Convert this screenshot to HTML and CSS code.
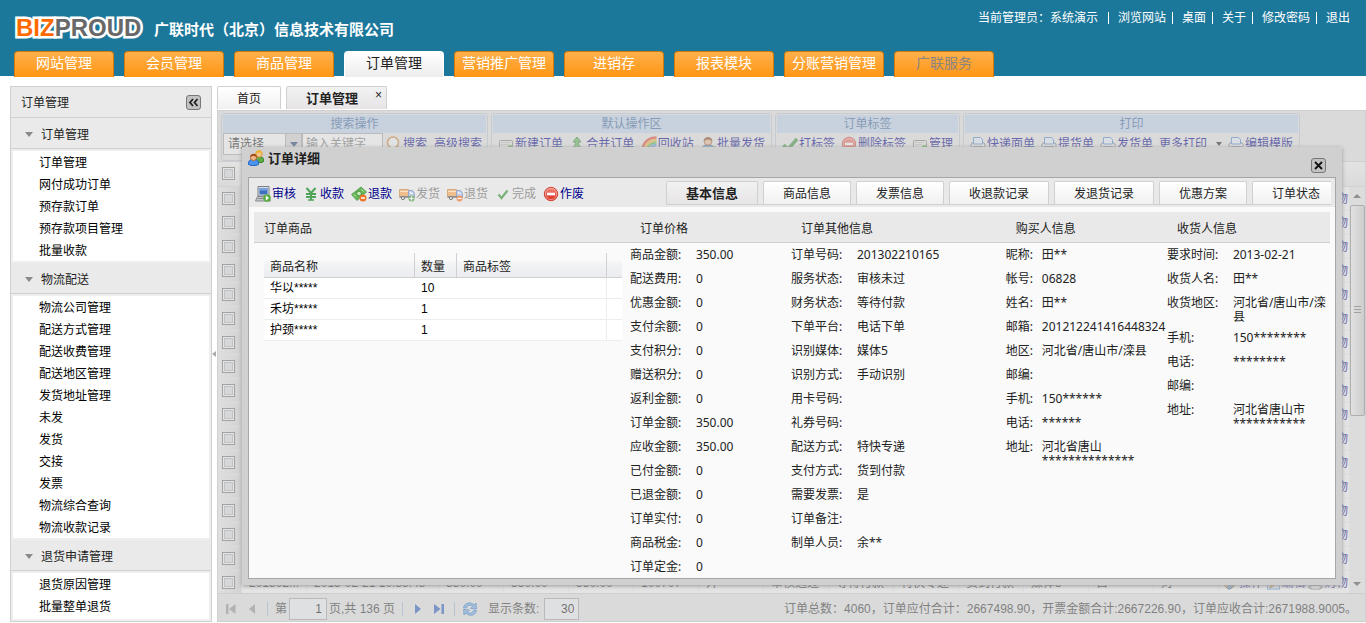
FILE: index.html
```html
<!DOCTYPE html>
<html lang="zh-CN">
<head>
<meta charset="utf-8">
<title>订单管理</title>
<link rel="stylesheet" href="styles.css">
</head>
<body>
<svg class="sprite" aria-hidden="true">
  <defs>
    <linearGradient id="g-red" x1="0" y1="0" x2="0" y2="1"><stop offset="0" stop-color="#f58b7c"/><stop offset="1" stop-color="#d52b1c"/></linearGradient>
  </defs>
  <symbol id="i-users" viewBox="0 0 16 16">
    <path d="M7 12c0-4 1-5 4.500-5s4.500 1 4.500 4l-2 1.500H7z" fill="#5cab46" stroke="#3b8429"/>
    <circle cx="11" cy="4" r="3.200" fill="#f3c58d" stroke="#d59635"/><path d="M7.500 4c0-5 7-5 7 0-2-2-5-2-7 0z" fill="#edb526"/>
    <path d="M.5 14.500c0-4 1-5 5-5s5 1 5 5c-3 1.500-7 1.500-10 0z" fill="#4a94ee" stroke="#2264bd"/>
    <circle cx="5.500" cy="7.500" r="3" fill="#f1b98a" stroke="#bd6b2f"/><path d="M2 7.500c0-5 7-5 7 0-2-2-5-2-7 0z" fill="#a84e1c"/>
  </symbol>
  <symbol id="i-laptop" viewBox="0 0 16 16">
    <path d="M3 .5h11V10H3z" fill="#dadde2" stroke="#7b8087"/><path d="M4.500 2h8v6.500h-8z" fill="#3c6fc0"/><path d="M4.500 2h8v2.500h-8z" fill="#78a2df"/>
    <path d="M2.500 10.500h11l2 4.500H.5z" fill="#c4c7cb" stroke="#85898e"/><path d="M3 12.500h6" stroke="#888"/>
    <circle cx="12" cy="12" r="3.800" fill="#59ad41"/><path d="M10.800 9.500l3.200 2.500-3.200 2.500z" fill="#fff"/>
  </symbol>
  <symbol id="i-yen" viewBox="0 0 16 16"><path d="M3.500 2L8 7l4.500-5M8 7v7M3 8h10M3 11h10" fill="none" stroke="#4fa457" stroke-width="2"/><path d="M5 14h6" stroke="#4fa457" stroke-width="1.500"/></symbol>
  <symbol id="i-money" viewBox="0 0 16 16">
    <path d="M.5 8.500L10 1l5.500 5L6 14.500z" fill="#64b557" stroke="#4b9a4b" stroke-width=".8"/><circle cx="8" cy="7.500" r="2.300" fill="#c8eabc" stroke="#3c8c3b" stroke-width=".8"/><path d="M3 8.500l2 2M10.500 3.500l2 2" stroke="#d4f0ca"/>
    <circle cx="12" cy="12" r="3.500" fill="#ee7427"/><path d="M10 12h4" stroke="#fff" stroke-width="1.500"/>
  </symbol>
  <symbol id="i-truck" viewBox="0 0 16 16">
    <path d="M.5 3.500h9v7h-9z" fill="#f3a85b" stroke="#d08a48"/><path d="M1 5.500h8" stroke="#ffe0b8"/>
    <path d="M9.500 4.500h4l2 3v4h-6z" fill="#a9bfe5" stroke="#6f87b3"/><path d="M11 6h2l1 2h-3z" fill="#e8f2ff"/><path d="M.5 11h14" stroke="#53565d" stroke-width="1.500"/>
    <circle cx="4" cy="12" r="1.600" fill="#ddd" stroke="#444"/>
  </symbol>
  <symbol id="i-truck-add" viewBox="0 0 16 16"><use href="#i-truck"/><circle cx="12.500" cy="12.500" r="3" fill="#4b9a3d"/><path d="M10.500 12.500h4M12.500 10.500v4" stroke="#fff" stroke-width="1.200"/></symbol>
  <symbol id="i-truck-del" viewBox="0 0 16 16"><use href="#i-truck"/><circle cx="12.500" cy="12.500" r="3" fill="#ee7427"/><path d="M10.500 12.500h4" stroke="#fff" stroke-width="1.200"/></symbol>
  <symbol id="i-check" viewBox="0 0 16 16"><path d="M3.500 8.500l3 3.500L12.500 4.500" fill="none" stroke="#3f9540" stroke-width="2.200"/></symbol>
  <symbol id="i-tick" viewBox="0 0 16 16"><path d="M1.500 9l4.500 4.500L15 3" fill="none" stroke="#3f9540" stroke-width="3.500"/></symbol>
  <symbol id="i-stop" viewBox="0 0 16 16"><circle cx="8" cy="8" r="6.700" fill="url(#g-red)" stroke="#d0453a"/><circle cx="8" cy="8" r="5.600" fill="none" stroke="#fbb6ab" stroke-width=".7"/><path d="M4 8h8" stroke="#fff" stroke-width="2.600"/></symbol>
  <symbol id="i-search" viewBox="0 0 16 16"><circle cx="7" cy="6.500" r="5.500" fill="#f6f9fd" stroke="#d08a3c" stroke-width="1.500"/><path d="M11 11l4 4" stroke="#b36b2b" stroke-width="2.500"/></symbol>
  <symbol id="i-form" viewBox="0 0 16 16"><rect x="1.500" y="4.500" width="13" height="9" rx="1" fill="#e7e7e3" stroke="#84867f"/><path d="M3 6.500h9M3 8.500h7" stroke="#c5c5c0"/><circle cx="12.500" cy="12" r="3" fill="#58a546"/></symbol>
  <symbol id="i-merge" viewBox="0 0 16 16"><path d="M8 1l4 5H9.500c0 4 2 5 4.500 6v3c-3-.5-5-2-6-4-1 2-3 3.500-6 4v-3c2.500-1 4.500-2 4.500-6H4z" fill="#65b85a" stroke="#37893a"/></symbol>
  <symbol id="i-rainbow" viewBox="0 0 16 16" fill="none"><path d="M1.500 15C1.500 7 7 1.500 15.500 1.500" stroke="#e34d3d" stroke-width="2.500"/><path d="M4 15C4 8.500 8.500 4 15.500 4" stroke="#f4b73e" stroke-width="2.500"/><path d="M6.500 15c0-5 3.500-8.500 9-8.500" stroke="#67b759" stroke-width="2.500"/><path d="M9 15c0-3.500 2.500-6 6.500-6" stroke="#5b9ddf" stroke-width="2.500"/></symbol>
  <symbol id="i-person" viewBox="0 0 16 16"><path d="M2 15c0-5 1.500-6 6-6s6 1 6 6z" fill="#5b96ce" stroke="#39699b"/><circle cx="8" cy="5.500" r="3.700" fill="#f2bf96" stroke="#a16036"/><path d="M3.500 5.500c0-6 9-6 9 0-3-2.500-6-2.500-9 0z" fill="#8c552c"/><circle cx="13" cy="13" r="3" fill="#58a546"/></symbol>
  <symbol id="i-printer" viewBox="0 0 16 16"><path d="M1 8l2-1.500h10L15 8v5.500H1z" fill="#ececee" stroke="#707580"/><path d="M3.500 1.500h7l2 2V8h-9z" fill="#e5f1fd" stroke="#568dc9"/><path d="M3 10.500h10v4H3z" fill="#fff" stroke="#7d828c"/></symbol>
  <symbol id="i-tools" viewBox="0 0 16 16"><circle cx="7" cy="8" r="6" fill="#e8b65a" stroke="#a2762d"/><path d="M4 13l9-9 2 2-8 9z" fill="#6d9fd8" stroke="#466b99"/></symbol>
  <symbol id="i-edit" viewBox="0 0 16 16"><rect x="1.500" y="2.500" width="13" height="12" fill="#e4effc" stroke="#5f91ce"/><path d="M4 13l1-3 7-8 2 2-7 8z" fill="#efad45" stroke="#a8742a"/></symbol>
  <symbol id="i-refresh" viewBox="0 0 16 16"><path d="M1.500 7C2 2 9 0 12 4l2-2 .5 6-6-.5 2-2C8.500 3.500 5 4 4.500 7zM14.500 9.500c-.5 5-7.500 6.500-10.500 2.500l-2 2L1.500 8.500l6 .5-2 2c2 2 5.500 1 6-1.500z" fill="#77b2ee" stroke="#2f77c7" stroke-width=".8"/></symbol>
  <symbol id="i-first" viewBox="0 0 16 16"><path d="M3 3h2.500v10H3zM12.500 3v10L6 8z" fill="currentColor"/></symbol>
  <symbol id="i-prev" viewBox="0 0 16 16"><path d="M11 3v10L5 8z" fill="currentColor"/></symbol>
  <symbol id="i-next" viewBox="0 0 16 16"><path d="M5 3v10l6-5z" fill="currentColor"/></symbol>
  <symbol id="i-last" viewBox="0 0 16 16"><path d="M3 3v10l6.500-5zM10.500 3H13v10h-2.500z" fill="currentColor"/></symbol>
</svg>

<header class="top">
  <div class="top-row">
    <div class="logo"><span class="logo-biz">BIZ</span>PROUD</div>
    <h1 class="company">广联时代（北京）信息技术有限公司</h1>
    <ul class="links">
      <li>当前管理员：系统演示</li>
      <li><a href="#">浏览网站</a></li>
      <li><a href="#">桌面</a></li>
      <li><a href="#">关于</a></li>
      <li><a href="#">修改密码</a></li>
      <li><a href="#">退出</a></li>
    </ul>
  </div>
  <nav class="nav">
    <a href="#">网站管理</a><a href="#">会员管理</a><a href="#">商品管理</a><a href="#" class="current">订单管理</a><a href="#">营销推广管理</a><a href="#">进销存</a><a href="#">报表模块</a><a href="#">分账营销管理</a><a href="#" class="off">广联服务</a>
  </nav>
</header>

<div class="body">
  <aside class="side">
    <div class="side-title"><span>订单管理</span>
      <button class="tool" aria-label="收起"><svg viewBox="0 0 15 15"><path d="M7 4L4 7.500 7 11M11.500 4l-3 3.500 3 3.500" fill="none" stroke="#222" stroke-width="1.800"/></svg></button>
    </div>
    <section>
      <h2>订单管理</h2>
      <ul><li><a href="#">订单管理</a></li><li><a href="#">网付成功订单</a></li><li><a href="#">预存款订单</a></li><li><a href="#">预存款项目管理</a></li><li><a href="#">批量收款</a></li></ul>
    </section>
    <section>
      <h2>物流配送</h2>
      <ul><li><a href="#">物流公司管理</a></li><li><a href="#">配送方式管理</a></li><li><a href="#">配送收费管理</a></li><li><a href="#">配送地区管理</a></li><li><a href="#">发货地址管理</a></li><li><a href="#">未发</a></li><li><a href="#">发货</a></li><li><a href="#">交接</a></li><li><a href="#">发票</a></li><li><a href="#">物流综合查询</a></li><li><a href="#">物流收款记录</a></li></ul>
    </section>
    <section class="fill">
      <h2>退货申请管理</h2>
      <ul><li><a href="#">退货原因管理</a></li><li><a href="#">批量整单退货</a></li></ul>
    </section>
  </aside>
  <div class="split"></div>

  <main class="main">
    <div class="tabs">
      <button class="tab">首页</button>
      <button class="tab active closable">订单管理<span class="x">×</span></button>
    </div>
    <div class="panel">
      <div class="toolbar">
        <div class="group g1"><h3>搜索操作</h3>
          <div class="tools">
            <select class="pick" aria-label="搜索类型"><option>请选择</option></select><span class="pick-arrow"></span>
            <input class="keyword" type="text" placeholder="输入关键字" aria-label="关键字">
            <button><svg><use href="#i-search"/></svg>搜索</button><button>高级搜索</button>
          </div></div>
        <div class="group g2"><h3>默认操作区</h3>
          <div class="tools"><button><svg><use href="#i-form"/></svg>新建订单</button><button><svg><use href="#i-merge"/></svg>合并订单</button><button><svg><use href="#i-rainbow"/></svg>回收站</button><button><svg><use href="#i-person"/></svg>批量发货</button></div></div>
        <div class="group g3"><h3>订单标签</h3>
          <div class="tools"><button><svg><use href="#i-tick"/></svg>打标签</button><button><svg><use href="#i-stop"/></svg>删除标签</button><button><svg><use href="#i-form"/></svg>管理</button></div></div>
        <div class="group g4"><h3>打印</h3>
          <div class="tools"><button><svg><use href="#i-printer"/></svg>快递面单</button><button><svg><use href="#i-printer"/></svg>提货单</button><button><svg><use href="#i-printer"/></svg>发货单</button><button class="menu">更多打印</button><button><svg><use href="#i-printer"/></svg>编辑模版</button></div></div>
      </div>

      <div class="grid">
        <div class="grid-head"><input type="checkbox" aria-label="全选"></div>
        <div class="grid-body">
          <table class="rows">
            <colgroup><col class="c-check"><col class="c-id"><col class="c-time"><col span="12" class="c-cell"><col></colgroup>
            <tbody id="rows"></tbody>
          </table>
          <div class="scroll"><i class="up"></i><i class="thumb"></i><i class="down"></i></div>
        </div>
      </div>

      <div class="pager">
        <button class="dim" aria-label="首页"><svg><use href="#i-first"/></svg></button>
        <button class="dim" aria-label="上一页"><svg><use href="#i-prev"/></svg></button>
        <i class="sep"></i>
        <label for="page">第</label><input id="page" class="page" type="text" value="1"><span>页,共 136 页</span>
        <i class="sep"></i>
        <button aria-label="下一页"><svg><use href="#i-next"/></svg></button>
        <button aria-label="末页"><svg><use href="#i-last"/></svg></button>
        <i class="sep"></i>
        <button aria-label="刷新"><svg><use href="#i-refresh"/></svg></button>
        <label for="size" class="size-label">显示条数:</label><input id="size" class="size" type="text" value="30">
        <span class="sum">订单总数：4060，订单应付合计：2667498.90，开票金额合计:2667226.90，订单应收合计:2671988.9005。</span>
      </div>

      <div class="mask"></div>

      <div class="dialog" role="dialog" aria-labelledby="dlg-title">
        <div class="dlg-head">
          <svg><use href="#i-users"/></svg><h2 id="dlg-title">订单详细</h2>
          <button class="tool" aria-label="关闭"><svg viewBox="0 0 15 15"><path d="M4 4l7 7M11 4l-7 7" stroke="#111" stroke-width="1.800"/></svg></button>
        </div>
        <div class="dlg-body">
          <div class="dlg-bar">
            <div class="acts">
              <button><svg><use href="#i-laptop"/></svg>审核</button><button><svg><use href="#i-yen"/></svg>收款</button><button><svg><use href="#i-money"/></svg>退款</button><button disabled><svg><use href="#i-truck-add"/></svg>发货</button><button disabled><svg><use href="#i-truck-del"/></svg>退货</button><button disabled><svg><use href="#i-check"/></svg>完成</button><button><svg><use href="#i-stop"/></svg>作废</button>
            </div>
            <div class="dlg-tabs">
              <button class="tab active">基本信息</button><button class="tab">商品信息</button><button class="tab">发票信息</button><button class="tab">收退款记录</button><button class="tab">发退货记录</button><button class="tab">优惠方案</button><button class="tab">订单状态</button>
            </div>
          </div>
          <div class="cols heads"><h3>订单商品</h3><h3>订单价格</h3><h3>订单其他信息</h3><h3>购买人信息</h3><h3>收货人信息</h3></div>
          <div class="cols">
            <div class="goods-box">
              <table class="goods">
                <colgroup><col class="w-name"><col class="w-num"><col class="w-tag"><col></colgroup>
                <thead><tr><th>商品名称</th><th>数量</th><th>商品标签</th><th></th></tr></thead>
                <tbody>
                  <tr><td>华以*****</td><td>10</td><td></td><td></td></tr>
                  <tr><td>禾坊*****</td><td>1</td><td></td><td></td></tr>
                  <tr><td>护颈*****</td><td>1</td><td></td><td></td></tr>
                </tbody>
              </table>
            </div>
            <dl class="fields">
              <div><dt>商品金额:</dt><dd>350.00</dd></div><div><dt>配送费用:</dt><dd>0</dd></div><div><dt>优惠金额:</dt><dd>0</dd></div><div><dt>支付余额:</dt><dd>0</dd></div><div><dt>支付积分:</dt><dd>0</dd></div><div><dt>赠送积分:</dt><dd>0</dd></div><div><dt>返利金额:</dt><dd>0</dd></div><div><dt>订单金额:</dt><dd>350.00</dd></div><div><dt>应收金额:</dt><dd>350.00</dd></div><div><dt>已付金额:</dt><dd>0</dd></div><div><dt>已退金额:</dt><dd>0</dd></div><div><dt>订单实付:</dt><dd>0</dd></div><div><dt>商品税金:</dt><dd>0</dd></div><div><dt>订单定金:</dt><dd>0</dd></div>
            </dl>
            <dl class="fields">
              <div><dt>订单号码:</dt><dd>201302210165</dd></div><div><dt>服务状态:</dt><dd>审核未过</dd></div><div><dt>财务状态:</dt><dd>等待付款</dd></div><div><dt>下单平台:</dt><dd>电话下单</dd></div><div><dt>识别媒体:</dt><dd>媒体5</dd></div><div><dt>识别方式:</dt><dd>手动识别</dd></div><div><dt>用卡号码:</dt><dd></dd></div><div><dt>礼券号码:</dt><dd></dd></div><div><dt>配送方式:</dt><dd>特快专递</dd></div><div><dt>支付方式:</dt><dd>货到付款</dd></div><div><dt>需要发票:</dt><dd>是</dd></div><div><dt>订单备注:</dt><dd></dd></div><div><dt>制单人员:</dt><dd>余**</dd></div>
            </dl>
            <dl class="fields short">
              <div><dt>昵称:</dt><dd>田**</dd></div><div><dt>帐号:</dt><dd>06828</dd></div><div><dt>姓名:</dt><dd>田**</dd></div><div><dt>邮箱:</dt><dd>201212241416448324</dd></div><div><dt>地区:</dt><dd>河北省/唐山市/滦县</dd></div><div><dt>邮编:</dt><dd></dd></div><div><dt>手机:</dt><dd>150******</dd></div><div><dt>电话:</dt><dd>******</dd></div><div><dt>地址:</dt><dd>河北省唐山 **************</dd></div>
            </dl>
            <dl class="fields">
              <div><dt>要求时间:</dt><dd>2013-02-21</dd></div><div><dt>收货人名:</dt><dd>田**</dd></div><div><dt>收货地区:</dt><dd>河北省/唐山市/滦县</dd></div><div><dt>手机:</dt><dd>150********</dd></div><div><dt>电话:</dt><dd>********</dd></div><div><dt>邮编:</dt><dd></dd></div><div><dt>地址:</dt><dd>河北省唐山市 ***********</dd></div>
            </dl>
          </div>
        </div>
      </div>
    </div>
  </main>
</div>
<script src="rows.js"></script>
</body>
</html>
```

FILE: rows.js
```js
const cells = ["201302...", "2013-02-21 10:38:48", "350.00", "350.00", "350.00", "100707", "开", "审核通过", "等待付款", "特快专递", "货到付款", "媒体5", "自", "对"];
const icon = (name) => `<svg><use href="#${name}"/></svg>`;
const actions = `<div class="row-acts"><a href="#">${icon("i-tools")}操作</a><a href="#">${icon("i-edit")}编辑</a><a href="#">${icon("i-printer")}购物</a></div>`;
const row = `<tr><td><input type="checkbox" aria-label="选择"></td>${cells.map((c) => `<td>${c}</td>`).join("")}<td>${actions}</td></tr>`;
document.getElementById("rows").innerHTML = row.repeat(17);
```

FILE: styles.css
```css
* { box-sizing: border-box; }
html, body { height: 100%; }
body {
  margin: 0;
  display: flex;
  flex-direction: column;
  overflow: hidden;
  background: #fff;
  color: #222;
  font: 12px/14px "Liberation Sans", "Noto Sans CJK SC", sans-serif;
}
h1, h2, h3, ul, dl, dd { margin: 0; padding: 0; font-size: 12px; font-weight: normal; }
ul { list-style: none; }
a { color: inherit; text-decoration: none; }
button { border: 0; padding: 0; background: none; color: inherit; font: inherit; white-space: nowrap; }
svg { width: 16px; height: 16px; flex: none; display: block; }
input, select { font: inherit; margin: 0; border-radius: 0; }
.sprite { position: absolute; width: 0; height: 0; }

/* header */
.top { flex: none; height: 76px; background: #1c789b; color: #fff; display: flex; flex-direction: column; }
.top-row { flex: 1; display: flex; align-items: flex-start; padding: 9px 16px 0; }
.logo {
  flex: none;
  width: 138px;
  font: bold 24px/38px "Liberation Sans", sans-serif;
  color: #686868;
  -webkit-text-stroke: 5px #fff;
  paint-order: stroke fill;
}
.logo-biz { color: #ff6a00; }
.company { font-size: 15px; font-weight: bold; line-height: 42px; white-space: nowrap; }
.links { margin-left: auto; display: flex; }
.links li { line-height: 18px; padding-right: 10px; display: flex; align-items: center; white-space: nowrap; }
.links li + li::before { content: ""; width: 1px; height: 12px; margin-right: 9px; background: #fff; }
.links li:not(:first-child):not(:last-child) { padding-right: 6px; }
.links li:last-child { padding-right: 0; }
.nav { flex: none; display: flex; gap: 10px; padding-left: 14px; }
.nav a {
  width: 100px; height: 26px;
  border: 1px solid #d27a0c; border-bottom: 0; border-radius: 4px 4px 0 0;
  background: linear-gradient(#ffb04c, #ff9613);
  font-size: 14px; line-height: 23px; text-align: center; white-space: nowrap;
}
.nav .current { border-color: #fff; background: linear-gradient(#fff, #ededed); color: #222; }
.nav .off { color: #8a8580; }

/* body layout */
.body { flex: 1; min-height: 0; display: flex; padding: 10px 0 1px 10px; }
.side { flex: none; width: 202px; border: 1px solid #d0d0d0; background: #eee; display: flex; flex-direction: column; overflow: hidden; }
.side-title { flex: none; display: flex; align-items: center; justify-content: space-between; height: 31px; padding: 1px 10px 0; border-bottom: 1px solid #d0d0d0; background: #eaeaea; }
.tool { width: 15px; height: 15px; border: 1px solid #777; border-radius: 3px; background: #c2c2c2; display: flex; align-items: center; justify-content: center; }
.tool svg { width: 15px; height: 15px; }
.side section { flex: none; }
.side .fill { flex: 1 0 auto; display: flex; flex-direction: column; }
.fill ul { flex: 1; }
.side h2 { height: 31px; padding: 3px 0 0 14px; border-bottom: 1px solid #d0d0d0; background: #eaeaea; display: flex; align-items: center; gap: 8px; }
.side h2::before { content: ""; border: 4px solid transparent; border-top: 5px solid #8a8a8a; border-bottom: 0; }
.side section ul { margin: 2px; padding-left: 26px; background: #fff; }
.side li { height: 22px; line-height: 24px; color: #000; }
.split { flex: none; width: 5px; display: flex; align-items: center; }
.split::before { content: ""; border: 3px solid transparent; border-right: 4px solid #aaa; border-left: 0; }
.main { flex: 1; min-width: 0; display: flex; flex-direction: column; }

/* tabs */
.tabs { flex: none; display: flex; gap: 5px; height: 23px; }
.tab { position: relative; height: 23px; padding: 1px 19px 0; border: 1px solid #d0d0d0; border-bottom: 0; border-radius: 2px 2px 0 0; background: linear-gradient(#fff, #f1f1f1); color: #222; line-height: 22px; }
.tab.active { font-size: 13px; font-weight: bold; background: linear-gradient(#f2f2f2, #e7e4e6); }
.tab.closable { padding-right: 28px; }
.tab .x { position: absolute; top: 0; right: 4px; font-size: 12px; font-weight: normal; line-height: 16px; }

/* order list panel */
.panel { position: relative; flex: 1; min-height: 0; display: flex; flex-direction: column; border: 1px solid #d0d0d0; margin-top: 1px; background: #e9e9e9; }
.toolbar { flex: none; display: flex; gap: 3px; height: 51px; padding: 2px 3px 0; border-bottom: 1px solid #d0d0d0; overflow: hidden; }
.group { flex: none; border: 1px solid #bfcbd6; border-radius: 3px; padding: 1px; height: 48px; }
.g1 { width: 267px; }
.g2 { width: 281px; }
.g3 { width: 185px; }
.g4 { width: 337px; }
.group h3 { height: 18px; line-height: 18px; text-align: center; background: #c4d8f0; color: #416aa3; }
.tools { display: flex; align-items: center; justify-content: space-between; height: 22px; padding: 0 5px; color: #00008b; }
.tools button { display: flex; align-items: center; gap: 1px; height: 22px; }
.g1 .tools { padding: 0 4px 0 0; justify-content: flex-start; gap: 3px; }
.g1 .tools button + button { margin-left: 4px; }
.pick { appearance: none; width: 63px; height: 22px; margin-right: -3px; padding: 0 4px; border: 1px solid #aaa; border-right: 0; background: #fff; color: #222; }
.pick-arrow { width: 17px; height: 22px; margin-right: -3px; border: 1px solid #aaa; background: #d6d6d6; display: flex; align-items: center; justify-content: center; }
.pick-arrow::before { content: ""; border: 4px solid transparent; border-top: 5px solid #26437a; border-bottom: 0; }
.keyword { width: 81px; height: 22px; padding: 0 3px; border: 1px solid #aaa; background: #fff; }
.keyword::placeholder { color: #777; }
.menu::after { content: ""; margin: 0 0 0 8px; border: 3px solid transparent; border-top: 4px solid #222; border-bottom: 0; }

.grid { flex: 1; min-height: 0; display: flex; flex-direction: column; background: #fff; }
.grid-head { flex: none; height: 25px; padding: 5px 4px; border-bottom: 1px solid #d8d8d8; background: linear-gradient(#fafafa, #e9e9ec); }
.grid-body { flex: 1; min-height: 0; display: flex; overflow: hidden; }
input[type="checkbox"] { appearance: none; display: block; width: 13px; height: 13px; border: 1px solid #767879; background: #dfe2e5; box-shadow: inset 0 0 0 1px #fff, inset 0 0 0 2px #b5b8bb; }
.rows { flex: 1; min-width: 0; table-layout: fixed; border-collapse: separate; border-spacing: 0; }
.rows td { height: 24px; padding: 0 7px; border-right: 1px solid #ededed; border-bottom: 1px solid #ededed; background: #fdfdfd; color: #000; white-space: nowrap; overflow: hidden; }
.rows td:first-child { padding: 0 4px; background: linear-gradient(90deg, #f3f3f3, #d9d9d9); }
.rows td:last-child { padding: 0 0 0 4px; border-right: 0; }
.c-check { width: 24px; }
.c-id { width: 64px; }
.c-time { width: 132px; }
.c-cell { width: 65px; }
.row-acts { display: flex; justify-content: space-between; padding-right: 1px; color: #00008b; }
.row-acts a { display: flex; gap: 1px; align-items: center; }
.row-acts svg { width: 15px; }
.scroll { flex: none; width: 16px; background: #ededed; display: flex; flex-direction: column; align-items: center; }
.up, .down { flex: none; width: 8px; height: 18px; display: flex; align-items: center; }
.up::before { content: ""; border: 4px solid transparent; border-bottom: 4px solid #555; border-top: 0; }
.down { margin-top: auto; }
.down::before { content: ""; border: 4px solid transparent; border-top: 4px solid #555; border-bottom: 0; }
.thumb { width: 15px; height: 52%; border: 1px solid #909090; border-radius: 2px; background: linear-gradient(90deg, #f6f6f6, #cfcfcf); display: flex; align-items: center; justify-content: center; }
.thumb::before { content: ""; width: 7px; height: 9px; background: repeating-linear-gradient(#777 0 1px, transparent 1px 3px); }

.pager { flex: none; display: flex; align-items: center; height: 28px; padding: 2px 8px 0 5px; gap: 5px; border-top: 1px solid #d0d0d0; color: #333; white-space: nowrap; }
.pager button { color: #2b5fc0; }
.pager .dim { color: #999; }
.sep { width: 1px; height: 14px; margin: 0 2px; background: #a5bde0; }
.pager input { height: 22px; border: 1px solid #a8a8a8; background: #f3f5f6; padding: 0 4px; text-align: right; color: #111; }
.pager .page { width: 38px; margin: 0 -3px; }
.size { width: 35px; }
.size-label { margin-left: 5px; }
.sum { margin-left: auto; }

.mask { position: absolute; inset: 0; background: rgba(204, 204, 204, .5); }

/* order detail dialog */
.dialog { position: absolute; top: 36px; right: 23px; bottom: 36px; left: 24px; padding: 0 6px 6px; background: #d0d0d0; box-shadow: 0 1px 4px #999; display: flex; flex-direction: column; }
.dlg-head { flex: none; display: flex; height: 30px; padding: 3px 10px 0 0; gap: 4px; }
.dlg-head h2 { flex: 1; font-size: 13px; font-weight: bold; line-height: 18px; }
.dlg-head .tool { margin-top: 8px; }
.dlg-body { flex: 1; min-height: 0; border: 1px solid #a6a6a6; background: #fafafa; overflow: hidden; }
.dlg-bar { display: flex; justify-content: space-between; height: 29px; margin-bottom: 5px; padding: 3px 4px 0 6px; background: #e9e9e9; }
.acts { display: flex; gap: 7px; color: #00008b; }
.acts button { display: flex; align-items: center; gap: 1px; height: 25px; }
.acts button:disabled { color: #9c9c9c; }
.acts button:disabled svg { opacity: .65; }
.dlg-tabs { display: flex; gap: 5px; width: 665px; height: 24px; border-bottom: 1px solid #d0d0d0; overflow: hidden; }
.dlg-tabs .tab { flex: none; }
.cols { display: grid; grid-template-columns: 35fr 15fr 20fr 15fr 15fr; margin: 0 5px; padding-right: 2px; }
.cols > * { min-width: 0; }
.heads { height: 31px; border-bottom: 1px solid #d0d0d0; background: #e9e9e9; }
.heads h3 { padding-left: 10px; line-height: 34px; }
.goods-box { padding: 10px 8px 0 10px; }
.goods { width: 100%; table-layout: fixed; border-collapse: separate; border-spacing: 0; background: #fff; color: #000; }
.w-name { width: 151px; }
.w-num { width: 42px; }
.w-tag { width: 150px; }
.goods th { height: 25px; padding: 3px 6px 0; border-right: 1px solid #d0d0d0; border-bottom: 1px solid #d0d0d0; background: linear-gradient(#fafafa 35%, #f4f5f6 36%, #ebecef); color: #222; font-weight: normal; text-align: left; }
.goods th:last-child { border-right: 0; }
.goods td { height: 21px; padding: 0 6px; border-bottom: 1px solid #ededed; }
.goods td:nth-child(3) { border-right: 1px solid #ededed; }
.fields { font-family: "Noto Sans", "Noto Sans CJK SC", sans-serif; }
.fields div { display: grid; grid-template-columns: 66px 1fr; min-height: 24px; padding: 5px 0 2px; }
.short div { grid-template-columns: 36px 1fr; }
.fields dd { min-width: 0; }
```
